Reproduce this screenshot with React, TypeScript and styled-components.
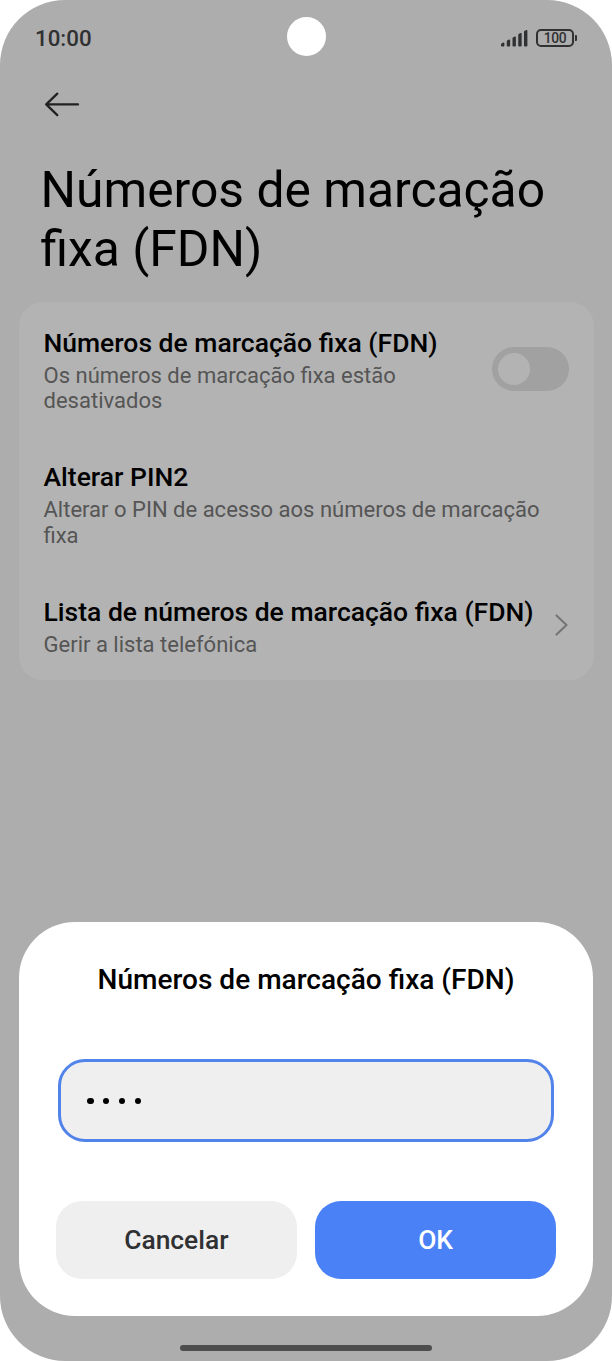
import React from "react";
import styled, { createGlobalStyle } from "styled-components";

const GlobalStyle = createGlobalStyle`
  * { box-sizing: border-box; }
  body { margin: 0; background: #fff; font-family: Roboto, "Liberation Sans", sans-serif; }
  h1, h2, h3, p { margin: 0; }
`;

const Phone = styled.main`
  width: 612px;
  height: 1361px;
  border-radius: 65px;
  background: #adadad;
  overflow: hidden;
  display: flex;
  flex-direction: column;
  align-items: center;
`;

const StatusBar = styled.header`
  width: 100%;
  height: 76px;
  padding: 0 35px 0 35px;
  display: grid;
  grid-template-columns: 1fr 39px 1fr;
  align-items: center;
`;

const Clock = styled.span`
  font-size: 22.3px;
  font-weight: 500;
  line-height: 26px;
  color: #303133;
`;

const Camera = styled.span`
  width: 39px;
  height: 39px;
  margin-top: -3px;
  border-radius: 50%;
  background: #fff;
`;

const Indicators = styled.div`
  display: flex;
  justify-content: flex-end;
  align-items: center;
  gap: 8px;
`;

const Battery = styled.div`
  display: flex;
  align-items: center;
  gap: 1px;
  margin-top: -1px;
`;

const BatteryBody = styled.span`
  width: 38px;
  height: 18px;
  border: 2px solid #303133;
  border-radius: 5px;
  font-size: 13.8px;
  font-weight: 500;
  letter-spacing: -0.3px;
  line-height: 15px;
  text-align: center;
  color: #303133;
`;

const BatteryTip = styled.span`
  width: 2px;
  height: 6px;
  border-radius: 0 1px 1px 0;
  background: #303133;
`;

const Toolbar = styled.nav`
  width: 100%;
  height: 56px;
  padding: 0 44px;
  display: flex;
  align-items: center;
`;

const BackIcon = styled.svg`
  display: block;
  width: 36px;
  height: 26px;
`;

const PageTitle = styled.h1`
  width: 100%;
  height: 170px;
  padding: 29px 40px 0 40.5px;
  font-size: 49.8px;
  font-weight: 400;
  line-height: 59px;
  color: #000;
`;

const Card = styled.section`
  width: 575px;
  height: 378px;
  padding: 24.6px 25px 0;
  border-radius: 24px;
  background: #b3b3b3;
  display: flex;
  flex-direction: column;
  gap: 47.6px;
`;

const Item = styled.div`
  display: flex;
  align-items: center;
  justify-content: space-between;
`;

const ItemText = styled.div<{ $width?: number }>`
  width: ${({ $width }) => ($width ? `${$width}px` : "auto")};
`;

const ItemTitle = styled.h2`
  margin-bottom: 4px;
  font-size: 26.5px;
  font-weight: 500;
  line-height: 32px;
  white-space: nowrap;
  color: #000;
`;

const ItemNote = styled.p`
  font-size: 22.03px;
  line-height: 25.5px;
  white-space: nowrap;
  color: #555;
`;

const Toggle = styled.span`
  width: 77px;
  height: 44px;
  padding: 0 6px;
  margin-bottom: 3px;
  border-radius: 22px;
  background: #a1a1a1;
  display: flex;
  align-items: center;
`;

const Knob = styled.span`
  width: 32px;
  height: 32px;
  border-radius: 50%;
  background: #b3b3b3;
`;

const Chevron = styled.svg`
  width: 14px;
  height: 24px;
  margin-bottom: 3px;
`;

const Dialog = styled.section`
  width: 574px;
  height: 394px;
  margin-top: 241.5px;
  padding: 39px 37px 37px;
  border-radius: 56px;
  background: #fff;
  display: flex;
  flex-direction: column;
  align-items: center;
`;

const DialogTitle = styled.h3`
  height: 98px;
  font-size: 28.05px;
  font-weight: 500;
  line-height: 38px;
  white-space: nowrap;
  color: #000;
`;

const PinField = styled.div`
  width: 496px;
  height: 83px;
  padding: 2px 26px 0;
  border: 3px solid #5183ea;
  border-radius: 27px;
  background: #efefef;
  display: flex;
  align-items: center;
  gap: 9.4px;
`;

const PinDot = styled.span`
  width: 6.5px;
  height: 6.5px;
  border-radius: 50%;
  background: #000;
`;

const Actions = styled.div`
  width: 500px;
  margin-top: auto;
  display: grid;
  grid-template-columns: 1fr 1fr;
  gap: 18.5px;
`;

const Action = styled.button<{ $primary?: boolean }>`
  height: 78px;
  padding: 1px 0 0;
  border: 0;
  border-radius: 26px;
  background: ${({ $primary }) => ($primary ? "#4b81f7" : "#efefef")};
  color: ${({ $primary }) => ($primary ? "#fff" : "#303133")};
  font-family: inherit;
  font-size: 26.4px;
  font-weight: 500;
`;

const HomeBar = styled.span`
  width: 252px;
  height: 6.5px;
  margin-top: 29px;
  border-radius: 4px;
  background: #4d4d4d;
`;

const bars = [4.5, 7.5, 10.5, 14, 17];

export default function App() {
  return (
    <>
      <GlobalStyle />
      <Phone>
        <StatusBar>
          <Clock>10:00</Clock>
          <Camera />
          <Indicators>
            <svg width="27" height="18" viewBox="0 0 27 18" fill="#303133">
              {bars.map((h, i) => (
                <path
                  key={h}
                  d={`M${i * 5.75} ${18 - h + 1.8} q0 -.8 .8 -1.1 l1.5 -.6 q1.1 -.3 1.1 .8 V16.6 q0 1 -1 1 h-1.4 q-1 0 -1 -1z`}
                />
              ))}
            </svg>
            <Battery>
              <BatteryBody>100</BatteryBody>
              <BatteryTip />
            </Battery>
          </Indicators>
        </StatusBar>
        <Toolbar>
          <BackIcon
            viewBox="0 0 36 26"
            fill="none"
            stroke="#222"
            strokeWidth="2.3"
            strokeLinecap="round"
            strokeLinejoin="round"
          >
            <path d="M34 13.4H2.2M13.3 2.7L2.2 13.4L13.3 24.1" />
          </BackIcon>
        </Toolbar>
        <PageTitle>
          Números de marcação
          <br />
          fixa (FDN)
        </PageTitle>
        <Card>
          <Item>
            <ItemText $width={400}>
              <ItemTitle>Números de marcação fixa (FDN)</ItemTitle>
              <ItemNote>
                Os números de marcação fixa estão
                <br />
                desativados
              </ItemNote>
            </ItemText>
            <Toggle>
              <Knob />
            </Toggle>
          </Item>
          <Item>
            <ItemText>
              <ItemTitle>Alterar PIN2</ItemTitle>
              <ItemNote>
                Alterar o PIN de acesso aos números de marcação
                <br />
                fixa
              </ItemNote>
            </ItemText>
          </Item>
          <Item>
            <ItemText>
              <ItemTitle>Lista de números de marcação fixa (FDN)</ItemTitle>
              <ItemNote>Gerir a lista telefónica</ItemNote>
            </ItemText>
            <Chevron
              viewBox="0 0 14 24"
              fill="none"
              stroke="#757575"
              strokeWidth="2.1"
              strokeLinecap="round"
              strokeLinejoin="round"
            >
              <path d="M1.5 2.4L11.5 12L1.5 21.6" />
            </Chevron>
          </Item>
        </Card>
        <Dialog>
          <DialogTitle>Números de marcação fixa (FDN)</DialogTitle>
          <PinField>
            <PinDot />
            <PinDot />
            <PinDot />
            <PinDot />
          </PinField>
          <Actions>
            <Action>Cancelar</Action>
            <Action $primary>OK</Action>
          </Actions>
        </Dialog>
        <HomeBar />
      </Phone>
    </>
  );
}
